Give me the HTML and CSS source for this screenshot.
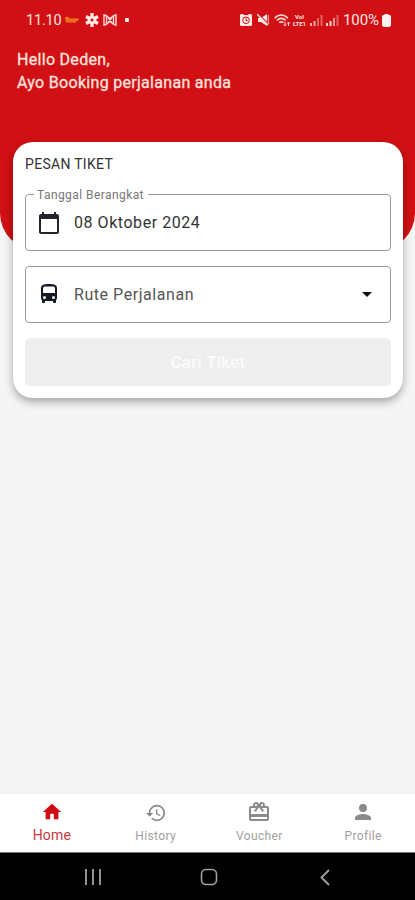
FILE: index.html
```html
<!DOCTYPE html>
<html lang="id">
<head>
<meta charset="utf-8">
<meta name="viewport" content="width=device-width, initial-scale=1">
<title>Pesan Tiket</title>
<link rel="stylesheet" href="styles.css">
</head>
<body>
<div class="phone">
  <header class="hero">
    <div class="status">
      <div class="status-left">
        <span class="clock">11.10</span>
        <svg class="brand" width="15" height="8" viewBox="0 0 15 8"><path d="M0 1h4v1.500h10l-1 2.500h-2v1.500H1z" fill="#f47a18"/><path d="M3 3v2.500M5.500 3.500v2M8 3.500v2M10.500 4v1.500" stroke="#c9491a" stroke-width=".7"/></svg>
        <svg class="flower" width="14" height="14" viewBox="0 0 14 14"><path d="M7 0v14M1 3.500l12 7M1 10.500l12-7" stroke="#ffe9e5" stroke-width="3.200"/><circle cx="7" cy="7" r="4.300" fill="#ffe9e5"/><circle cx="7" cy="7" r="1.500" fill="#d01014"/></svg>
        <svg class="bow" width="14" height="12" viewBox="0 0 14 12" fill="none" stroke="#ffd8d4" stroke-width="1.400"><path d="M1 1l2 .5 4 3 4-3 2-.5v10l-2-.5-4-3-4 3-2 .5z"/><path d="M3.500 2v8M10.500 2v8M5 4l4 4M9 4L5 8"/></svg>
        <i class="dot"></i>
      </div>
      <div class="status-right">
        <svg width="12" height="12" viewBox="0 0 12 12"><path d="M1 0h2l1 1h4l1-1h2l1 1v10l-1 1H1l-1-1V1z" fill="#ffe9e5"/><circle cx="6" cy="6.300" r="3.300" fill="none" stroke="#d01014"/><path d="M6 4.200v2.300h1.700" fill="none" stroke="#d01014"/></svg>
        <svg class="mute" width="12" height="12" viewBox="0 0 12 12"><path d="M1 4h3l6-4v12L4 8H1z" fill="#ffe9e5"/><path d="M1 0l11 10.500" stroke="#d01014" stroke-width="1.300"/><path d="M0 0l11 11" stroke="#ffe9e5" stroke-width="1.300"/><path d="M11.300 1v9" stroke="#ffb9b3"/></svg>
        <svg class="wifi" width="17" height="13" viewBox="0 0 17 13" fill="none" stroke="#ffd4cf" stroke-width="1.700"><path d="M.7 4.200C4-.1 10.500-.1 13.800 4.200M3 6.500c2.200-2.800 6.300-2.800 8.500 0M5.300 8.700c1-1.200 2.900-1.200 3.900 0"/><path d="M11 8v4m-1.300-1.500L11 12l1.300-1.500M14.500 12V8m-1.300 1.500L14.500 8l1.300 1.500" stroke-width="1"/></svg>
        <span class="volte"><span>VoI</span><span>LTE1</span></span>
        <svg class="sig" width="13" height="12" viewBox="0 0 13 12"><path d="M0 9h2v3H0zM3.500 7h2v5h-2z" fill="#f8aaa5"/><path d="M7 4h2v8H7zM10.500 1h2v11h-2z" fill="#e0615f"/></svg>
        <svg class="sig2" width="13" height="12" viewBox="0 0 13 12"><path d="M0 9h2v3H0zM3.500 7h2v5h-2z" fill="#ffd6d1"/><path d="M7 4h2v8H7z" fill="#f09691"/><path d="M10.500 1h2v11h-2z" fill="#e0615f"/></svg>
        <span class="percent">100%</span>
        <svg class="battery" width="9" height="13" viewBox="0 0 9 13"><path d="M2.500 0h4v1H8l1 1v9.500L7.500 13h-6L0 11.500V2l1-1h1.500z" fill="#fff1ef"/></svg>
      </div>
    </div>
    <div class="greeting"><p class="hello">Hello Deden,</p><p class="invite">Ayo Booking perjalanan anda</p></div>
  </header>
  <main class="content">
    <section class="card">
      <h1>PESAN TIKET</h1>
      <fieldset class="field date">
        <legend>Tanggal Berangkat</legend>
        <svg width="24" height="24" viewBox="0 0 24 24" fill="#23252b"><path d="M20 3h-1V1h-2v2H7V1H5v2H4c-1.100 0-2 .9-2 2v16c0 1.100.9 2 2 2h16c1.100 0 2-.9 2-2V5c0-1.100-.9-2-2-2zm0 18H4V8h16v13z"/></svg>
        <span class="date-text">08 Oktober 2024</span>
      </fieldset>
      <div class="field route">
        <svg class="bus" width="24" height="24" viewBox="0 0 24 24"><path fill="#171922" fill-rule="evenodd" d="M4 16c0 .88.39 1.670 1 2.220V20c0 .55.450 1 1 1h1c.55 0 1-.45 1-1v-1h8v1c0 .55.450 1 1 1h1c.55 0 1-.45 1-1v-1.780c.61-.55 1-1.340 1-2.220V6c0-3.500-3.580-4-8-4s-8 .5-8 4v10zM6 6.500C6 5 7 4.500 8 4.500h8c1 0 2 .5 2 2V11H6zM7.500 17a1.500 1.500 0 1 1 0-3 1.500 1.500 0 0 1 0 3zm9 0a1.500 1.500 0 1 1 0-3 1.500 1.500 0 0 1 0 3z"/></svg>
        <span class="route-text">Rute Perjalanan</span>
        <svg class="caret" width="10" height="5" viewBox="0 0 10 5"><path d="M0 0h10L5 5z" fill="#111"/></svg>
      </div>
      <button class="search" disabled>Cari Tiket</button>
    </section>
  </main>
  <nav class="tabs">
    <a class="tab active"><svg width="22" height="22" viewBox="0 0 24 24"><path fill="currentColor" d="M10 20v-6h4v6h5v-8h3L12 3 2 12h3v8z"/></svg><span>Home</span></a>
    <a class="tab history"><svg width="22" height="22" viewBox="0 0 24 24"><path fill="currentColor" d="M13 3a9 9 0 0 0-9 9H1l3.890 3.890.07.14L9 12H6c0-3.870 3.130-7 7-7s7 3.130 7 7-3.130 7-7 7c-1.930 0-3.680-.79-4.940-2.060l-1.420 1.420A8.950 8.950 0 0 0 13 21a9 9 0 0 0 0-18zm-1 5v5l4.280 2.540.72-1.210-3.500-2.080V8z"/></svg><span>History</span></a>
    <a class="tab voucher"><svg width="24" height="24" viewBox="0 0 24 24"><path fill="currentColor" d="M20 6h-2.180c.11-.31.180-.65.180-1a3 3 0 0 0-5.500-1.650l-.5.670-.5-.68A3 3 0 0 0 6 5c0 .35.070.69.180 1H4c-1.110 0-1.990.89-1.990 2L2 19c0 1.110.89 2 2 2h16c1.110 0 2-.89 2-2V8c0-1.110-.89-2-2-2zm-5-2c.55 0 1 .45 1 1s-.45 1-1 1-1-.45-1-1 .45-1 1-1zM9 4c.55 0 1 .45 1 1s-.45 1-1 1-1-.45-1-1 .45-1 1-1zm11 15H4v-2h16v2zm0-5H4V8h5.080L7 10.830 8.620 12 11 8.760l1-1.360 1 1.360L15.380 12 17 10.830 14.920 8H20v6z"/></svg><span>Voucher</span></a>
    <a class="tab profile"><svg width="24" height="24" viewBox="0 0 24 24"><path fill="currentColor" d="M12 12a4 4 0 1 0 0-8 4 4 0 0 0 0 8zm0 2c-2.670 0-8 1.340-8 4v2h16v-2c0-2.660-5.330-4-8-4z"/></svg><span>Profile</span></a>
  </nav>
  <footer class="system">
    <svg width="16" height="16" viewBox="0 0 16 16"><path d="M1 0v16M8 0v16M15 0v16" stroke="#929292" stroke-width="2"/></svg>
    <svg class="home-key" width="18" height="18" viewBox="0 0 18 18"><rect x="1.500" y="1.500" width="15" height="15" rx="4.500" fill="none" stroke="#a2a2a2" stroke-width="1.600"/></svg>
    <svg width="10" height="17" viewBox="0 0 10 17"><path d="M9 1L1.500 8.500 9 16" fill="none" stroke="#a2a2a2" stroke-width="1.800"/></svg>
  </footer>
</div>
</body>
</html>
```
FILE: styles.css
```css
* { box-sizing: border-box; }
body { margin: 0; background: #f5f5f5; font-family: Roboto, "Liberation Sans", sans-serif; }
p, h1 { margin: 0; }
svg { display: block; flex: none; }
.phone { display: flex; flex-direction: column; width: 415px; height: 900px; overflow: hidden; background: #f5f5f5; }
.hero { flex: none; height: 250px; background: #d01014; border-radius: 0 0 37px 37px; }
.status { display: flex; justify-content: space-between; height: 40px; padding: 0 24px 0 26px; color: #ffe4e0; }
.status-left, .status-right { display: flex; align-items: center; }
.clock { width: 39px; font-size: 14.5px; letter-spacing: -.2px; }
.flower { margin-left: 5px; }
.bow { margin-left: 4px; }
.dot { width: 4px; height: 4px; margin-left: 8px; background: #ffe9e5; border-radius: 1px; }
.mute { margin-left: 5px; }
.wifi { margin-left: 5px; }
.volte { display: flex; flex-direction: column; width: 15px; margin-left: 1px; font-size: 6px; line-height: 7px; font-weight: 700; text-align: center; }
.sig { margin-left: 3px; }
.sig2 { margin-left: 3px; }
.percent { width: 38px; margin-left: 4px; font-size: 15px; letter-spacing: -.1px; }
.battery { margin-left: 1px; }
.greeting { padding: 8px 17px; font-size: 16px; line-height: 23px; font-weight: 400; color: #ffe2df; -webkit-text-stroke: .3px; }
.hello { letter-spacing: .3px; }
.invite { letter-spacing: .3px; }
.content { flex: 1; margin: -108px 12px 0 13px; }
.card { height: 256px; padding: 14px 12px 12px; border-radius: 20px; background: #fff; box-shadow: 0 4px 9px rgba(0, 0, 0, .32); }
h1 { height: 16px; font-size: 14px; line-height: 16px; font-weight: 400; letter-spacing: .3px; color: #333; }
.field { display: flex; align-items: center; width: 100%; min-width: 0; margin: 0; border: 1px solid #999; border-radius: 4px; }
.date { height: 63px; margin-top: 16px; padding: 0 12px 6px 11px; }
legend { height: 13px; margin-left: -3px; padding: 1px 4px 0 3px; font-size: 12px; line-height: 13px; letter-spacing: .43px; color: #777; }
.date-text { margin-left: 13px; font-size: 16px; letter-spacing: .55px; color: #333; }
.route { height: 57px; margin-top: 15px; padding: 0 18px 0 11px; }
.bus { margin-bottom: 1px; }
.route-text { margin-left: 13px; font-size: 16px; letter-spacing: .55px; color: #555; }
.caret { margin-left: auto; }
.search { display: block; width: 100%; height: 48px; margin-top: 15px; padding: 0; border: 0; border-radius: 5px; background: #eee; color: #fbfbfb; font: 500 17px/48px Roboto, sans-serif; letter-spacing: .25px; }
.tabs { display: grid; grid-template-columns: repeat(4, 1fr); flex: none; height: 59px; background: #fff; border-top: 1px solid #ededed; }
.tab { display: flex; flex-direction: column; align-items: center; padding-top: 8px; color: #8b8b8b; font-size: 12px; letter-spacing: .35px; }
.tab span { margin-top: 5px; line-height: 14px; color: #a0a0a0; }
.tab.active { padding-top: 7px; color: #d00b10; font-size: 14px; letter-spacing: .2px; }
.tab.active span { color: #c9383c; }
.history { padding-top: 8px; }
.voucher { padding-top: 6px; }
.profile { padding-top: 6px; }
.system { display: flex; flex: none; align-items: center; height: 48px; padding: 1px 85px 0; background: #000; border-top: 1px solid #777; justify-content: space-between; }
.home-key { margin-right: 4px; }
```
